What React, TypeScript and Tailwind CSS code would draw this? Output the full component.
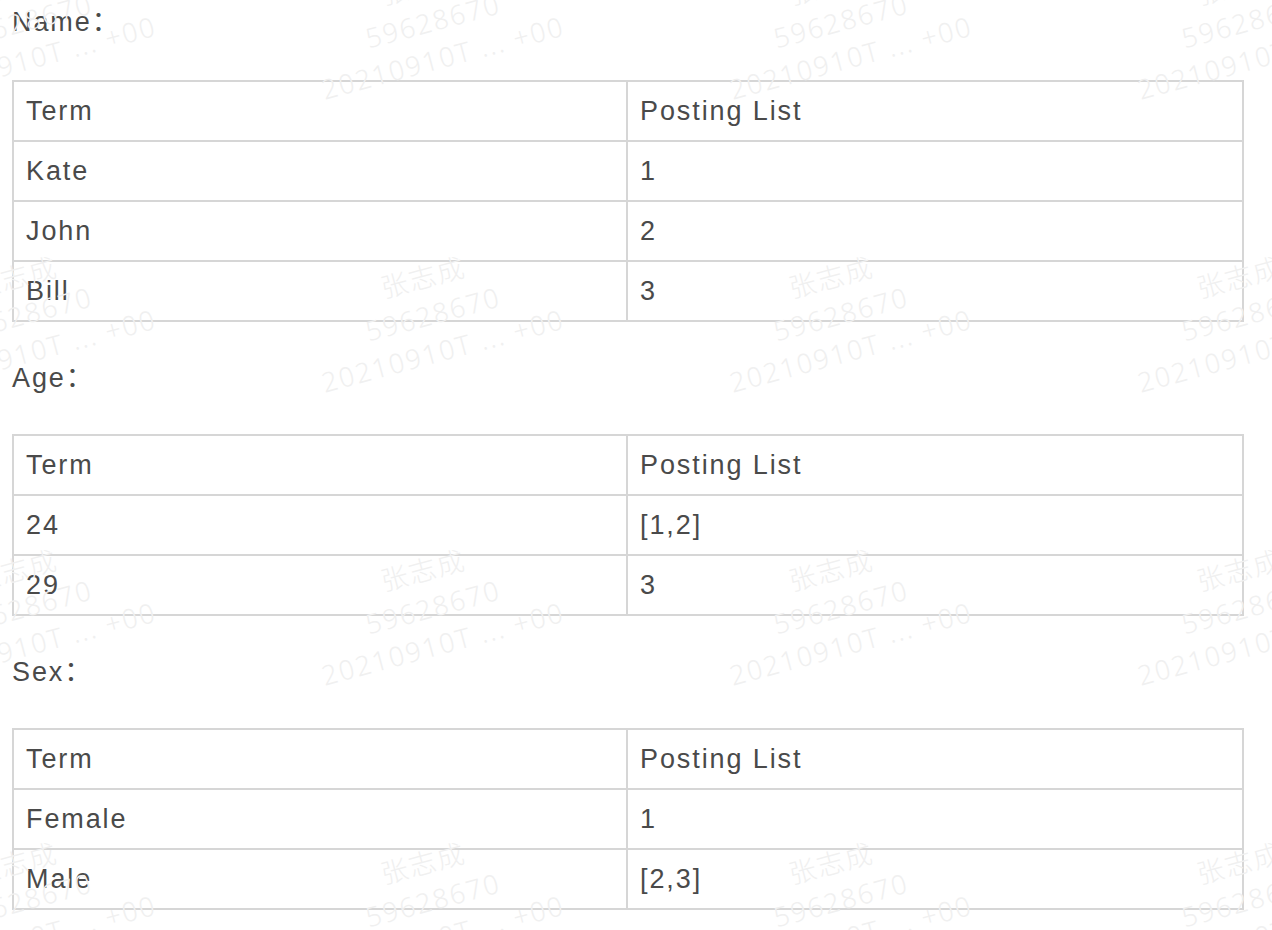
import React from 'react';

type Row = [string, string];

const sections: { label: string; rows: Row[] }[] = [
  { label: 'Name', rows: [['Kate', '1'], ['John', '2'], ['Bill', '3']] },
  { label: 'Age', rows: [['24', '[1,2]'], ['29', '3']] },
  { label: 'Sex', rows: [['Female', '1'], ['Male', '[2,3]']] },
];

const TEXT_FONT = "font-['Liberation_Sans','Noto_Sans_CJK_SC',sans-serif]";

const Watermark: React.FC = () => {
  const tiles = Array.from({ length: 4 * 5 });
  return (
    <div className="pointer-events-none absolute inset-0 overflow-hidden">
      <div className="absolute left-[-179px] top-[-126px] grid grid-cols-[repeat(4,408px)] auto-rows-[293px]">
        {tiles.map((_, i) => (
          <div key={i} className="flex items-center justify-center">
            <div className="-rotate-[15deg] flex flex-col items-center text-[27px] leading-[38px] font-light text-[#f0f0f0] whitespace-nowrap font-['Noto_Sans','Noto_Sans_CJK_SC',sans-serif]">
              <span>张志成</span>
              <span>59628670</span>
              <span>20210910T ... +00</span>
            </div>
          </div>
        ))}
      </div>
    </div>
  );
};

const TermTable: React.FC<{ rows: Row[] }> = ({ rows }) => (
  <table className="w-[1232px] table-fixed border-collapse border-2 border-[#d6d6d6]">
    <colgroup>
      <col className="w-[614px]" />
      <col />
    </colgroup>
    <tbody>
      <tr>
        <td className="h-[60px] border-2 border-[#d6d6d6] px-3 align-middle">Term</td>
        <td className="h-[60px] border-2 border-[#d6d6d6] px-3 align-middle">Posting List</td>
      </tr>
      {rows.map(([term, list]) => (
        <tr key={term}>
          <td className="h-[60px] border-2 border-[#d6d6d6] px-3 align-middle">{term}</td>
          <td className="h-[60px] border-2 border-[#d6d6d6] px-3 align-middle">{list}</td>
        </tr>
      ))}
    </tbody>
  </table>
);

export default function App() {
  return (
    <div className={`relative min-h-[930px] overflow-hidden bg-white px-3 ${TEXT_FONT} text-[27px] tracking-[1.9px] text-[#4a4a4a]`}>
      {sections.map((s, idx) => (
        <section key={s.label}>
          <p className={`h-[44px] leading-[44px] ${idx === 0 ? 'mb-[36px]' : 'mt-[34px] mb-[34px]'}`}>{s.label}：</p>
          <TermTable rows={s.rows} />
        </section>
      ))}
      <Watermark />
    </div>
  );
}
